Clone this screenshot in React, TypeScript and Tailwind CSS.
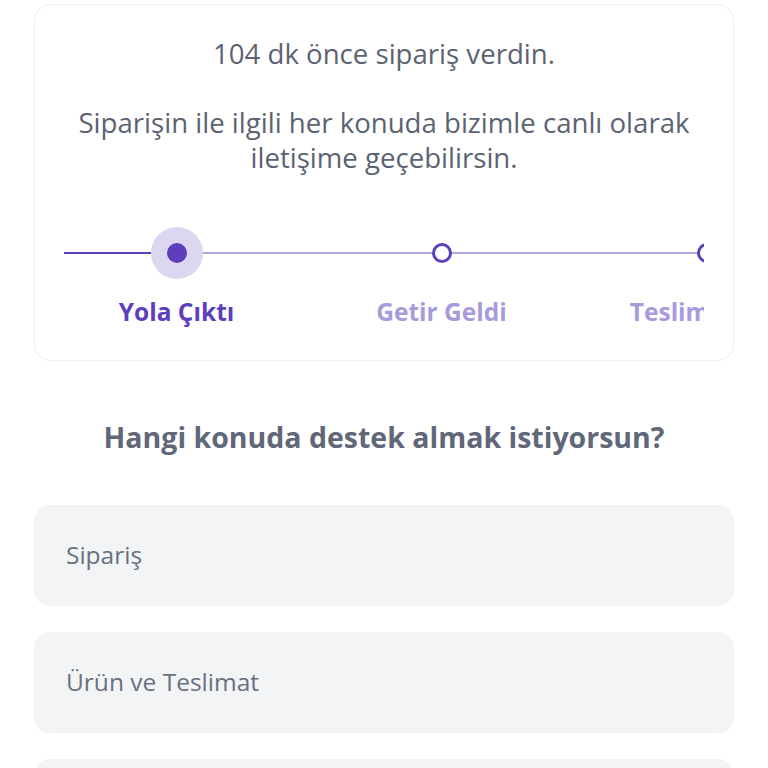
import React from "react";

interface Step {
  label: string;
  state: "active" | "upcoming";
}

const steps: Step[] = [
  { label: "Yola Çıktı", state: "active" },
  { label: "Getir Geldi", state: "upcoming" },
  { label: "Teslim Edildi", state: "upcoming" },
];

const topics = ["Sipariş", "Ürün ve Teslimat", "Ödeme"];

const StepItem: React.FC<{ step: Step; first: boolean }> = ({ step, first }) => {
  const active = step.state === "active";
  return (
    <div className="w-[265px] shrink-0 flex flex-col items-center">
      <div className="relative w-full h-[52px] flex items-center justify-center">
        {/* connector line */}
        <div className="absolute left-0 right-0 top-1/2 -translate-y-1/2 flex">
          <div
            className={`h-[2px] w-1/2 ${first ? "bg-[#5d3ebc]" : "bg-[#b2a7e0]"}`}
          />
          <div className="h-[2px] w-1/2 bg-[#b2a7e0]" />
        </div>
        {active ? (
          <div className="relative w-[52px] h-[52px] rounded-full bg-[#dcd6f0] flex items-center justify-center">
            <div className="w-[20px] h-[20px] rounded-full bg-[#5d3ebc]" />
          </div>
        ) : (
          <div className="relative w-[20px] h-[20px] rounded-full bg-white border-[3px] border-[#5d3ebc]" />
        )}
      </div>
      <span
        className={`mt-[16px] text-[24.5px] leading-[33px] font-bold whitespace-nowrap ${
          active ? "text-[#5d3ebc]" : "text-[#a89bdc]"
        }`}
      >
        {step.label}
      </span>
    </div>
  );
};

export default function App() {
  return (
    <div
      className="w-[768px] h-[768px] overflow-hidden bg-white px-[34px] pt-[4px]"
      style={{ fontFamily: '"Open Sans", "Noto Sans", sans-serif' }}
    >
      <div className="rounded-[16px] border border-[#eceef2] bg-white px-[29px] pt-[30px] pb-[32px]">
        <p className="text-center text-[27.6px] font-medium leading-[36px] text-[#5b6373] whitespace-nowrap">
          104 dk önce sipariş verdin.
        </p>
        <p className="mt-[34px] text-center text-[27.6px] font-medium leading-[35px] text-[#5b6373] whitespace-nowrap">
          Siparişin ile ilgili her konuda bizimle canlı olarak
          <br />
          iletişime geçebilirsin.
        </p>
        <div className="mt-[52px] overflow-hidden">
          <div className="flex -ml-[20px]">
            {steps.map((s, i) => (
              <StepItem key={s.label} step={s} first={i === 0} />
            ))}
          </div>
        </div>
      </div>

      <h2 className="mt-[55px] text-center text-[28.5px] leading-[43px] font-bold text-[#5f6779] whitespace-nowrap">
        Hangi konuda destek almak istiyorsun?
      </h2>

      <div className="mt-[46px] flex flex-col gap-[26px]">
        {topics.map((t) => (
          <button
            key={t}
            className="h-[101px] shrink-0 rounded-[16px] bg-[#f3f4f6] px-[32px] text-left text-[24.5px] text-[#687081]"
          >
            {t}
          </button>
        ))}
      </div>
    </div>
  );
}
